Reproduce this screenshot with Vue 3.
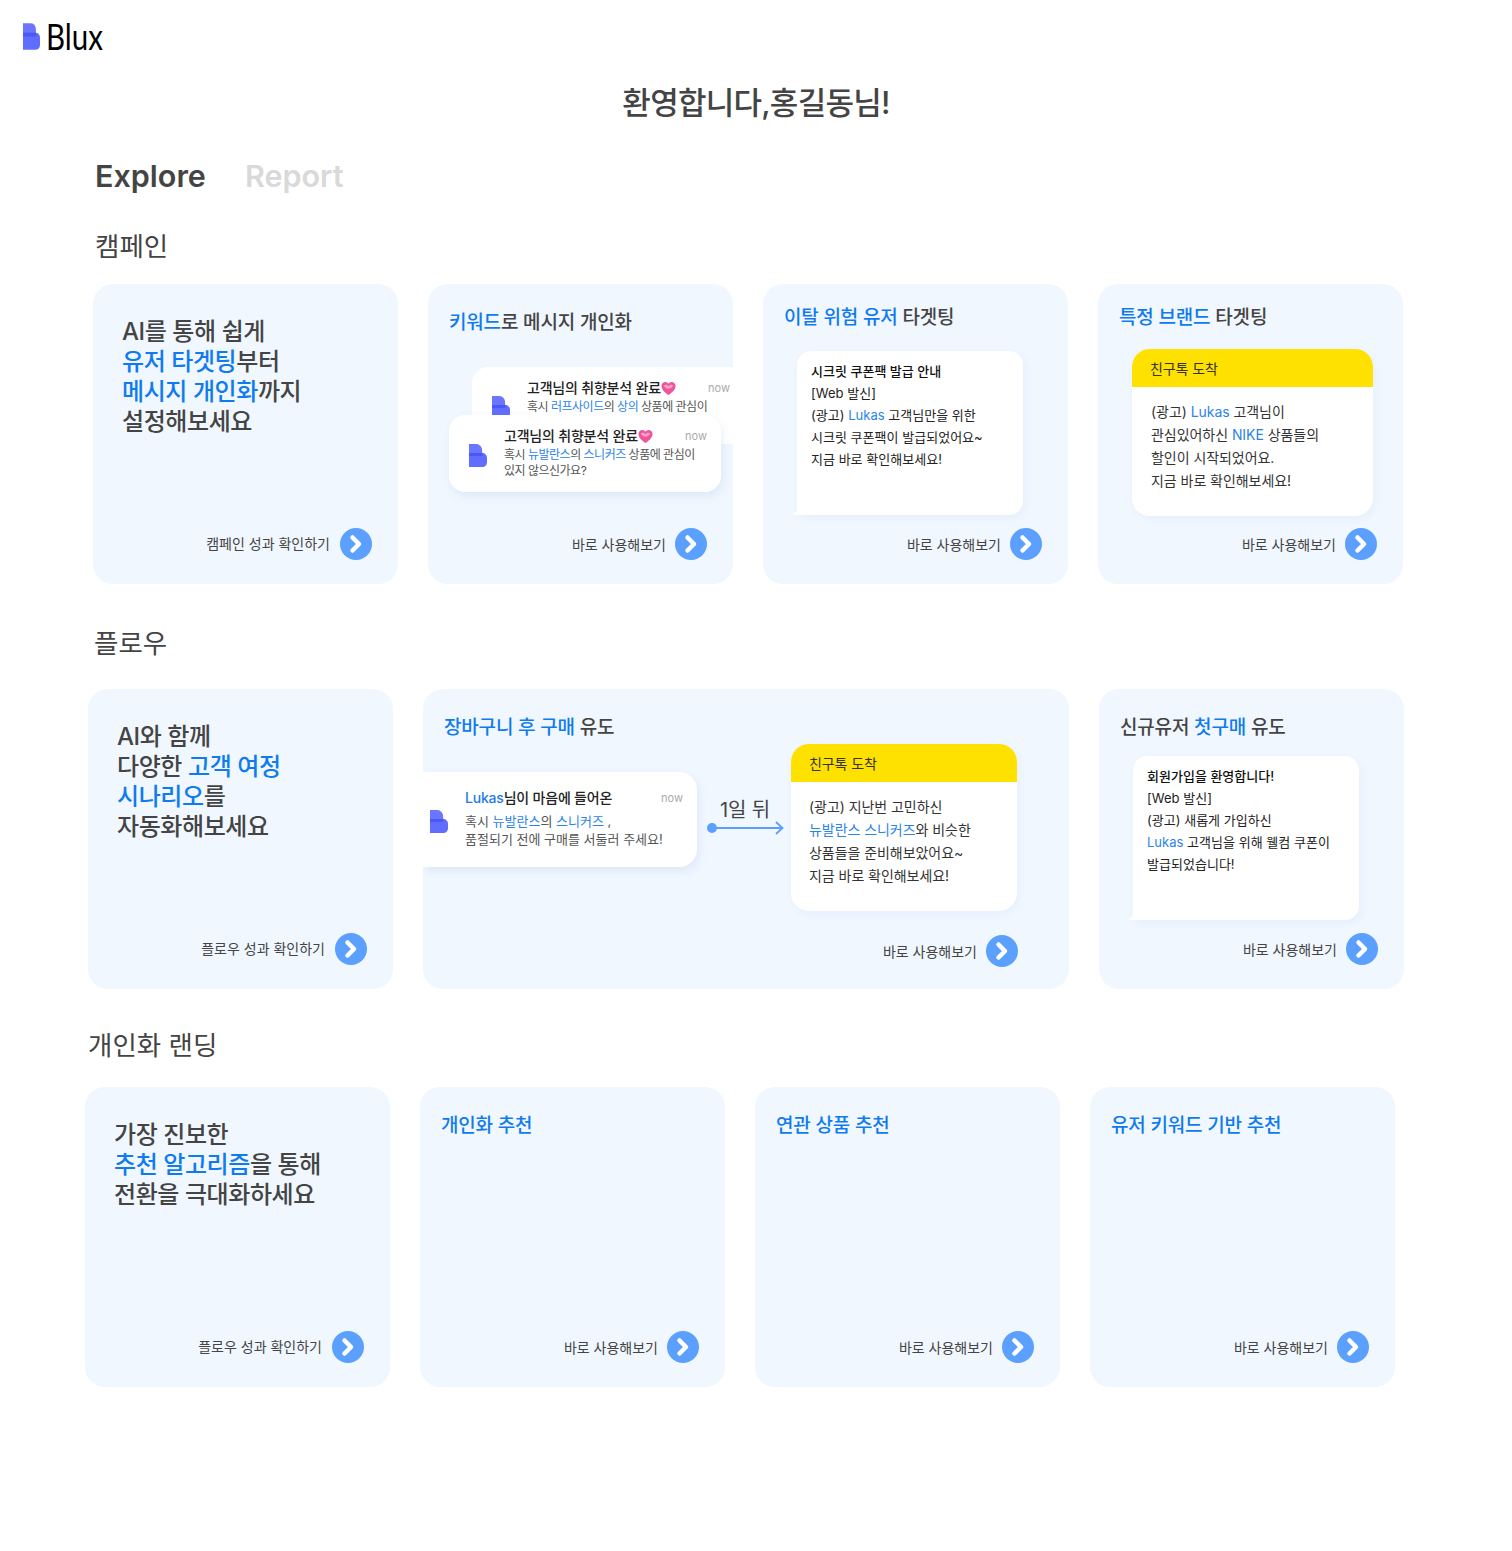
<script setup>
// 개인화 랜딩 카드
const landingCards = ['개인화 추천', '연관 상품 추천', '유저 키워드 기반 추천']
</script>

<template>
  <div class="page">
    <header class="logo-row">
      <svg class="logo-mark" viewBox="0 0 18 28">
        <path d="M0 0H8C11 0 13 2 13.500 5L14 14H0Z" fill="#6a76ff" />
        <path d="M0 10H13C16 10 18 12 18 15V23C18 26 16 28 13 28H0Z" fill="#616dff" />
        <path d="M0 10H14V14H0Z" fill="#4c58f5" />
      </svg>
      <span class="logo-text">Blux</span>
    </header>

    <h1 class="welcome">환영합니다,홍길동님!</h1>

    <nav class="tabs">
      <span class="tab active">Explore</span>
      <span class="tab">Report</span>
    </nav>

    <!-- 캠페인 -->
    <section class="section campaign">
      <h2 class="section-label">캠페인</h2>
      <div class="row">
        <article class="card">
          <p class="hero">AI를 통해 쉽게<br /><b>유저 타겟팅</b>부터<br /><b>메시지 개인화</b>까지<br />설정해보세요</p>
          <div class="cta hero-cta">
            <span>캠페인 성과 확인하기</span>
            <svg class="go" viewBox="0 0 32 32"><circle cx="16" cy="16" r="16" /><path d="M12.500 9.500 19 16l-6.500 6.500" /></svg>
          </div>
        </article>

        <article class="card">
          <h3 class="card-title low"><b>키워드</b>로 메시지 개인화</h3>
          <div class="stack">
            <div class="notice">
              <svg class="mark" viewBox="0 0 18 23">
                <path d="M0 0H7C10 0 12.500 2 13 5L13.500 12H0Z" fill="#6a76ff" />
                <path d="M0 9H13C16 9 18 11 18 14V18C18 21 16 23 13 23H0Z" fill="#616dff" />
                <path d="M0 9H13.500V12H0Z" fill="#4c58f5" />
              </svg>
              <div class="notice-body">
                <div class="notice-title">고객님의 취향분석 완료<svg class="heart" viewBox="0 0 16 16"><path d="M8 15C4 12 .5 9 .5 5.200 .5 2.800 2.300 1 4.500 1 6 1 7.300 1.800 8 3 8.700 1.800 10 1 11.500 1 13.700 1 15.500 2.800 15.500 5.200 15.500 9 12 12 8 15Z" fill="#f0559b" /><path d="M3 5C4 3.500 6 3.500 8 5.500 10 3.500 12 3.500 13 5 12 7 10 8 8 8 6 8 4 7 3 5Z" fill="#f9a3cb" /></svg></div>
                <p>혹시 <em>러프사이드</em>의 <em>상의</em> 상품에 관심이</p>
              </div>
              <span class="now">now</span>
            </div>
            <div class="notice front">
              <svg class="mark" viewBox="0 0 18 23">
                <path d="M0 0H7C10 0 12.500 2 13 5L13.500 12H0Z" fill="#6a76ff" />
                <path d="M0 9H13C16 9 18 11 18 14V18C18 21 16 23 13 23H0Z" fill="#616dff" />
                <path d="M0 9H13.500V12H0Z" fill="#4c58f5" />
              </svg>
              <div class="notice-body">
                <div class="notice-title">고객님의 취향분석 완료<svg class="heart" viewBox="0 0 16 16"><path d="M8 15C4 12 .5 9 .5 5.200 .5 2.800 2.300 1 4.500 1 6 1 7.300 1.800 8 3 8.700 1.800 10 1 11.500 1 13.700 1 15.500 2.800 15.500 5.200 15.500 9 12 12 8 15Z" fill="#f0559b" /><path d="M3 5C4 3.500 6 3.500 8 5.500 10 3.500 12 3.500 13 5 12 7 10 8 8 8 6 8 4 7 3 5Z" fill="#f9a3cb" /></svg></div>
                <p>혹시 <em>뉴발란스</em>의 <em>스니커즈</em> 상품에 관심이<br />있지 않으신가요?</p>
              </div>
              <span class="now">now</span>
            </div>
          </div>
          <div class="cta">
            <span>바로 사용해보기</span>
            <svg class="go" viewBox="0 0 32 32"><circle cx="16" cy="16" r="16" /><path d="M12.500 9.500 19 16l-6.500 6.500" /></svg>
          </div>
        </article>

        <article class="card">
          <h3 class="card-title"><b>이탈 위험 유저</b> 타겟팅</h3>
          <div class="bubble">
            <strong>시크릿 쿠폰팩 발급 안내</strong><br />
            [Web 발신]<br />
            (광고) <em>Lukas</em> 고객님만을 위한<br />
            시크릿 쿠폰팩이 발급되었어요~<br />
            지금 바로 확인해보세요!
          </div>
          <div class="cta">
            <span>바로 사용해보기</span>
            <svg class="go" viewBox="0 0 32 32"><circle cx="16" cy="16" r="16" /><path d="M12.500 9.500 19 16l-6.500 6.500" /></svg>
          </div>
        </article>

        <article class="card">
          <h3 class="card-title"><b>특정 브랜드</b> 타겟팅</h3>
          <div class="kakao">
            <div class="kakao-head">친구톡 도착</div>
            <p>(광고) <em>Lukas</em> 고객님이<br />관심있어하신 <em>NIKE</em> 상품들의<br />할인이 시작되었어요.<br />지금 바로 확인해보세요!</p>
          </div>
          <div class="cta">
            <span>바로 사용해보기</span>
            <svg class="go" viewBox="0 0 32 32"><circle cx="16" cy="16" r="16" /><path d="M12.500 9.500 19 16l-6.500 6.500" /></svg>
          </div>
        </article>
      </div>
    </section>

    <!-- 플로우 -->
    <section class="section flow">
      <h2 class="section-label">플로우</h2>
      <div class="row">
        <article class="card">
          <p class="hero">AI와 함께<br />다양한 <b>고객 여정</b><br /><b>시나리오</b>를<br />자동화해보세요</p>
          <div class="cta hero-cta">
            <span>플로우 성과 확인하기</span>
            <svg class="go" viewBox="0 0 32 32"><circle cx="16" cy="16" r="16" /><path d="M12.500 9.500 19 16l-6.500 6.500" /></svg>
          </div>
        </article>

        <article class="card wide">
          <h3 class="card-title low"><b>장바구니 후 구매</b> 유도</h3>
          <div class="flow-line">
            <div class="cart-notice">
              <svg class="mark" viewBox="0 0 18 23">
                <path d="M0 0H7C10 0 12.500 2 13 5L13.500 12H0Z" fill="#6a76ff" />
                <path d="M0 9H13C16 9 18 11 18 14V18C18 21 16 23 13 23H0Z" fill="#616dff" />
                <path d="M0 9H13.500V12H0Z" fill="#4c58f5" />
              </svg>
              <div class="notice-body">
                <div class="notice-title"><i>Lukas</i>님이 마음에 들어온</div>
                <p>혹시 <em>뉴발란스</em>의 <em>스니커즈</em> ,<br />품절되기 전에 구매를 서둘러 주세요!</p>
              </div>
              <span class="now">now</span>
            </div>
            <div class="delay">
              <span>1일 뒤</span>
              <svg width="80" height="16" viewBox="0 0 80 16">
                <circle cx="6" cy="8" r="5" fill="#5b9fff" />
                <path d="M6 8H76M70 2l6.500 6-6.500 6" fill="none" stroke="#5b9fff" stroke-width="1.800" />
              </svg>
            </div>
            <div class="kakao">
              <div class="kakao-head">친구톡 도착</div>
              <p>(광고) 지난번 고민하신<br /><em>뉴발란스 스니커즈</em>와 비슷한<br />상품들을 준비해보았어요~<br />지금 바로 확인해보세요!</p>
            </div>
          </div>
          <div class="cta wide-cta">
            <span>바로 사용해보기</span>
            <svg class="go" viewBox="0 0 32 32"><circle cx="16" cy="16" r="16" /><path d="M12.500 9.500 19 16l-6.500 6.500" /></svg>
          </div>
        </article>

        <article class="card">
          <h3 class="card-title low">신규유저 <b>첫구매</b> 유도</h3>
          <div class="bubble welcome-bubble">
            <strong>회원가입을 환영합니다!</strong><br />
            [Web 발신]<br />
            (광고) 새롭게 가입하신<br />
            <em>Lukas</em> 고객님을 위해 웰컴 쿠폰이<br />
            발급되었습니다!
          </div>
          <div class="cta">
            <span>바로 사용해보기</span>
            <svg class="go" viewBox="0 0 32 32"><circle cx="16" cy="16" r="16" /><path d="M12.500 9.500 19 16l-6.500 6.500" /></svg>
          </div>
        </article>
      </div>
    </section>

    <!-- 개인화 랜딩 -->
    <section class="section landing">
      <h2 class="section-label">개인화 랜딩</h2>
      <div class="row">
        <article class="card">
          <p class="hero">가장 진보한<br /><b>추천 알고리즘</b>을 통해<br />전환을 극대화하세요</p>
          <div class="cta hero-cta">
            <span>플로우 성과 확인하기</span>
            <svg class="go" viewBox="0 0 32 32"><circle cx="16" cy="16" r="16" /><path d="M12.500 9.500 19 16l-6.500 6.500" /></svg>
          </div>
        </article>

        <article v-for="title in landingCards" :key="title" class="card">
          <h3 class="card-title low"><b>{{ title }}</b></h3>
          <div class="cta">
            <span>바로 사용해보기</span>
            <svg class="go" viewBox="0 0 32 32"><circle cx="16" cy="16" r="16" /><path d="M12.500 9.500 19 16l-6.500 6.500" /></svg>
          </div>
        </article>
      </div>
    </section>
  </div>
</template>

<style scoped>
* {
  box-sizing: border-box;
  margin: 0;
  padding: 0;
}

.page {
  width: 1512px;
  height: 1551px;
  background: #fff;
  color: #444;
  font-family: Inter, "Noto Sans CJK KR", sans-serif;
  overflow: hidden;
}

/* Header */
.logo-row {
  display: flex;
  align-items: flex-end;
  gap: 6px;
  padding: 23px 0 0 23px;
  height: 50px;
}

.logo-mark {
  width: 17px;
  height: 27px;
  flex: none;
}

.logo-text {
  font-family: Lato, sans-serif;
  font-size: 36px;
  line-height: 27px;
  color: #000;
  transform: scaleX(0.82);
  transform-origin: left bottom;
}

.welcome {
  margin-top: 31px;
  text-align: center;
  font-size: 31px;
  line-height: 44px;
  font-weight: 500;
  letter-spacing: -0.75px;
}

.tabs {
  display: flex;
  gap: 39px;
  margin-top: 29px;
  padding-left: 95px;
  font-size: 30.500px;
  line-height: 44px;
  font-weight: 600;
}

.tab {
  color: #d9d9d9;
}

.tab.active {
  color: #444;
}

/* Sections */
.section-label {
  font-size: 26.500px;
  line-height: 40px;
  font-weight: 400;
}

.row {
  display: flex;
  gap: 30px;
}

.campaign {
  margin: 28px 0 0 93px;
}

.campaign .section-label {
  padding-left: 2px;
  margin-bottom: 18px;
}

.flow {
  margin: 39px 0 0 88px;
}

.flow .section-label {
  padding-left: 6px;
  margin-bottom: 26px;
}

.landing {
  margin: 36px 0 0 85px;
}

.landing .section-label {
  padding-left: 3px;
  margin-bottom: 22px;
}

/* Cards */
.card {
  width: 305px;
  height: 300px;
  flex: none;
  display: flex;
  flex-direction: column;
  align-items: flex-start;
  background: #f0f7ff;
  border-radius: 20px;
  overflow: hidden;
}

.card.wide {
  width: 646px;
}

b {
  color: #0f7bef;
  font-weight: inherit;
}

em {
  font-style: normal;
  color: #2b84ea;
}

.hero {
  margin: 33px 0 0 29px;
  font-size: 24px;
  line-height: 30px;
  font-weight: 500;
  letter-spacing: -0.42px;
  white-space: nowrap;
}

.card-title {
  margin: 20px 0 0 21px;
  font-size: 19px;
  line-height: 28px;
  font-weight: 500;
  letter-spacing: -0.18px;
  white-space: nowrap;
}

.card-title.low {
  margin-top: 25px;
}

.cta {
  display: flex;
  align-items: center;
  align-self: flex-end;
  gap: 9px;
  margin: auto 26px 24px 0;
  font-size: 14px;
  line-height: 20px;
  color: #444;
  white-space: nowrap;
}

.cta span {
  position: relative;
  top: 1px;
}

.hero-cta {
  gap: 10px;
}

.hero-cta span {
  top: 0;
}

.wide-cta {
  margin: auto 51px 22px 0;
}

.go {
  width: 32px;
  height: 32px;
  flex: none;
}

.go circle {
  fill: #5b9fff;
}

.go path {
  fill: none;
  stroke: #fff;
  stroke-width: 4.500;
  stroke-linecap: round;
  stroke-linejoin: round;
}

/* 알림 카드 */
.stack {
  margin: 30px 0 0 21px;
}

.notice,
.cart-notice {
  display: flex;
  align-items: flex-start;
  background: #fff;
  white-space: nowrap;
}

.notice {
  width: 272px;
  height: 77px;
  margin-left: 23px;
  padding: 12px 14px 0 20px;
  border-radius: 16px;
}

.notice.front {
  position: relative;
  margin: -29px 0 0;
  box-shadow: 2px 4px 10px rgba(60, 110, 180, 0.1);
}

.mark {
  width: 18px;
  height: 23px;
  flex: none;
  margin: 17px 17px 0 0;
}

.notice-body {
  flex: 1;
  min-width: 0;
}

.notice-title {
  display: flex;
  align-items: center;
  font-size: 14px;
  line-height: 18px;
  font-weight: 500;
  color: #222;
  letter-spacing: -0.2px;
}

.notice-title i {
  font-style: normal;
  color: #1f7ae8;
}

.heart {
  width: 15px;
  height: 15px;
  margin-left: 0;
}

.notice-body p {
  margin-top: 2px;
  font-size: 12px;
  line-height: 16px;
  letter-spacing: -0.5px;
  color: #555;
}

.now {
  font-size: 11px;
  line-height: 18px;
  color: #aaa;
}

/* 말풍선 */
.bubble {
  position: relative;
  width: 226px;
  height: 164px;
  margin: 19px 0 0 34px;
  padding: 9px 14px;
  background: #fff;
  border-radius: 14px 14px 14px 0;
  font-size: 13px;
  line-height: 22px;
  letter-spacing: 0.02px;
  color: #222;
  white-space: nowrap;
  box-shadow: 2px 3px 8px rgba(60, 110, 180, 0.06);
}

.bubble::before {
  content: "";
  position: absolute;
  left: -5px;
  bottom: 0;
  width: 6px;
  height: 5px;
  background: #fff;
  clip-path: polygon(100% 0, 100% 100%, 0 100%);
}

.bubble strong {
  font-weight: 500;
  color: #111;
}

.welcome-bubble {
  margin-top: 14px;
}

.kakao {
  width: 241px;
  height: 167px;
  margin: 17px 0 0 34px;
  background: #fff;
  border-radius: 18px;
  overflow: hidden;
  box-shadow: 2px 3px 8px rgba(60, 110, 180, 0.06);
  white-space: nowrap;
  flex: none;
}

.kakao-head {
  height: 38px;
  padding-left: 18px;
  background: #ffe100;
  font-size: 14px;
  line-height: 40px;
  color: #333;
  letter-spacing: -0.1px;
}

.kakao p {
  padding: 13px 0 0 19px;
  font-size: 14px;
  line-height: 23px;
  letter-spacing: -0.05px;
  color: #333;
}

/* 장바구니 플로우 */
.flow-line {
  display: flex;
  align-items: flex-start;
  margin-top: 2px;
}

.cart-notice {
  width: 274px;
  height: 95px;
  margin-top: 28px;
  padding: 17px 14px 0 7px;
  border-radius: 0 18px 18px 0;
  box-shadow: 2px 4px 10px rgba(60, 110, 180, 0.1);
}

.cart-notice .mark {
  margin: 21px 17px 0 0;
}

.cart-notice .notice-title {
  font-size: 14px;
}

.cart-notice .notice-body p {
  margin-top: 5px;
  font-size: 13px;
  line-height: 18px;
  letter-spacing: 0;
}

.delay {
  width: 94px;
  margin-top: 54px;
  display: flex;
  flex-direction: column;
  align-items: center;
  font-size: 20px;
  line-height: 24px;
  color: #444;
}

.delay span {
  padding-left: 2px;
  letter-spacing: -0.2px;
}

.delay svg {
  margin: -2px 0 0 3px;
}

.flow-line .kakao {
  width: 226px;
  margin: 0;
}

.flow-line .kakao p {
  padding-left: 18px;
}
</style>

<style>
html,
body {
  margin: 0;
  background: #fff;
}
</style>
